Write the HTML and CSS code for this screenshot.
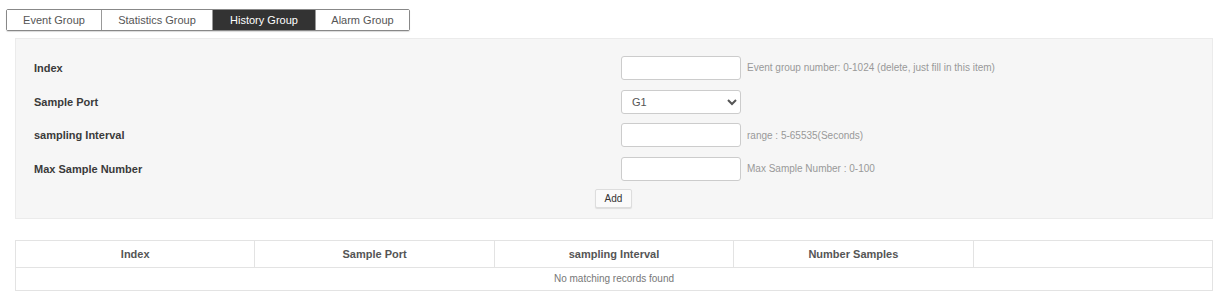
FILE: index.html
```html
<!DOCTYPE html>
<html lang="en">

<head>
    <meta charset="UTF-8">
    <meta name="viewport" content="width=device-width, initial-scale=1.0">
    <title>RMON History Group</title>
    <link rel="stylesheet" href="styles.css">
</head>

<body>
    <!-- 상단 탭 -->
    <div class="tab-bar">
        <span class="tab">Event Group</span>
        <span class="tab">Statistics Group</span>
        <span class="tab active">History Group</span>
        <span class="tab">Alarm Group</span>
    </div>

    <!-- 입력 폼 -->
    <div class="well">
        <div class="form-row">
            <label>Index</label>
            <div class="field">
                <input type="text">
                <span class="hint">Event group number: 0-1024 (delete, just fill in this item)</span>
            </div>
        </div>
        <div class="form-row">
            <label>Sample Port</label>
            <div class="field">
                <select>
                    <option>G1</option>
                </select>
            </div>
        </div>
        <div class="form-row">
            <label>sampling Interval</label>
            <div class="field">
                <input type="text">
                <span class="hint">range : 5-65535(Seconds)</span>
            </div>
        </div>
        <div class="form-row">
            <label>Max Sample Number</label>
            <div class="field">
                <input type="text">
                <span class="hint">Max Sample Number : 0-100</span>
            </div>
        </div>
        <div class="actions">
            <button>Add</button>
        </div>
    </div>

    <!-- 결과 테이블 -->
    <table class="result-table">
        <thead>
            <tr>
                <th>Index</th>
                <th>Sample Port</th>
                <th>sampling Interval</th>
                <th>Number Samples</th>
                <th></th>
            </tr>
        </thead>
        <tbody>
            <tr>
                <td colspan="5">No matching records found</td>
            </tr>
        </tbody>
    </table>
</body>

</html>
```

FILE: styles.css
```css
/* 기본 설정 */
body {
    font-family: "Liberation Sans", Arial, sans-serif;
    font-size: 11px;
    color: #333;
    margin: 0;
    padding: 9px 7px 0 6px;
    background-color: #fff;
}

/* 탭 */
.tab-bar {
    display: inline-flex;
    border: 1px solid #888;
    border-radius: 2px;
    height: 20px;
    box-shadow: 0 1px 1px rgba(0, 0, 0, 0.15);
}

.tab {
    display: flex;
    align-items: center;
    justify-content: center;
    border-left: 1px solid #999;
    color: #555;
    background-color: #fff;
}

.tab:first-child {
    border-left: none;
}

.tab:nth-child(1) { width: 94px; }
.tab:nth-child(2) { width: 110px; }
.tab:nth-child(3) { width: 102px; }
.tab:nth-child(4) { width: 93px; }

.tab.active {
    background-color: #333;
    color: #fff;
}

/* 폼 영역 */
.well {
    margin: 7px 0 0 9px;
    background-color: #f6f6f6;
    border: 1px solid #ebebeb;
    padding: 12px 19px 10px 18px;
}

.form-row {
    display: grid;
    grid-template-columns: 587px 1fr;
    align-items: center;
    height: 33.7px;
}

.form-row label {
    font-weight: bold;
    color: #3a3a3a;
}

.field {
    display: flex;
    align-items: center;
}

.field input,
.field select {
    width: 120px;
    height: 24px;
    box-sizing: border-box;
    border: 1px solid #ccc;
    border-radius: 3px;
    background-color: #fff;
    font-family: inherit;
    font-size: 11px;
    color: #555;
    margin: 0;
}

.field select {
    padding: 0 6px;
}

.hint {
    margin-left: 6px;
    color: #999;
    font-size: 10px;
}

.actions {
    text-align: center;
    margin-top: 3px;
}

.actions button {
    height: 19px;
    padding: 0 9px;
    font-family: inherit;
    font-size: 10px;
    color: #333;
    background-color: #fafafa;
    border: 1px solid #ddd;
    border-radius: 2px;
    box-shadow: 0 1px 1px rgba(0, 0, 0, 0.1);
}

/* 결과 테이블 */
.result-table {
    margin: 21px 0 0 9px;
    width: 1198px;
    border-collapse: collapse;
    table-layout: fixed;
}

.result-table th,
.result-table td {
    border: 1px solid #e3e3e3;
    text-align: center;
    color: #555;
}

.result-table th {
    height: 26px;
    font-weight: bold;
    padding: 0;
}

.result-table td {
    height: 22px;
    padding: 0;
    color: #777;
    font-size: 10px;
}
```
